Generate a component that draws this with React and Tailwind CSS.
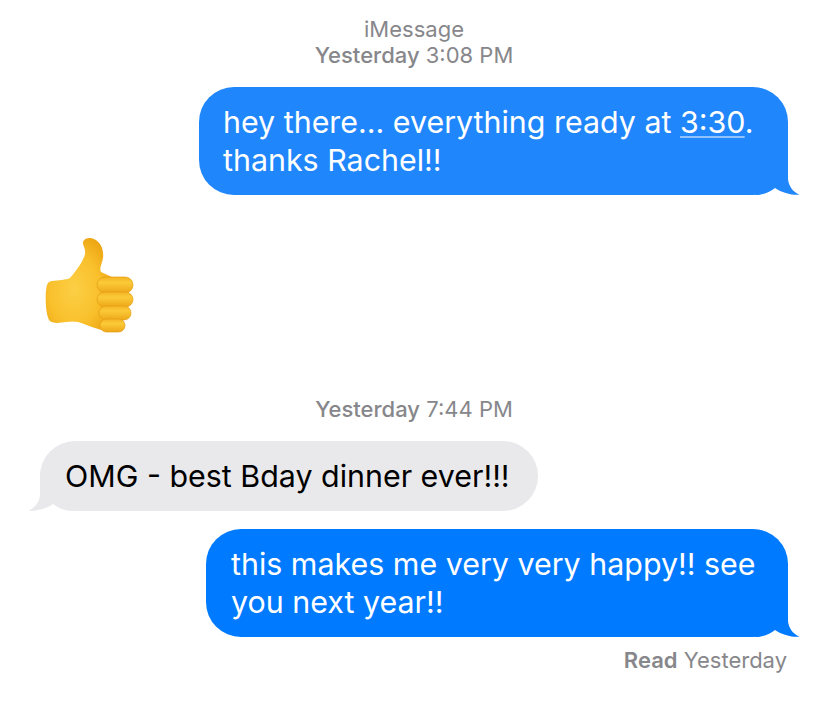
import React from 'react'

const Tail = ({ color, left }) => (
    <svg
        viewBox="0 0 45 40"
        className={`absolute bottom-0 w-[45px] h-[40px] ${left ? '-left-[12px] -scale-x-100' : '-right-[12px]'}`}
    >
        <path d="M33 0 V24 C33.500 31 38 37 44.500 39.700 C38 40.500 27 38 20 33 C15 37 8 40 0 40 Z" fill={color} />
    </svg>
)

const Bubble = ({ children, color, left, className }) => (
    <div className={`relative rounded-[35px] ${className}`} style={{ backgroundColor: color }}>
        <Tail color={color} left={left} />
        <div className="relative">{children}</div>
    </div>
)

const ThumbsUp = () => (
    <svg viewBox="0 0 92 98" className="w-[92px] h-[98px]">
        <defs>
            <radialGradient id="hand" cx="0.42" cy="0.55" r="0.62">
                <stop offset="0" stopColor="#fccf45" />
                <stop offset="0.6" stopColor="#f9c02c" />
                <stop offset="1" stopColor="#eca412" />
            </radialGradient>
            <linearGradient id="finger" x1="0" y1="0" x2="0" y2="1">
                <stop offset="0" stopColor="#f4b423" />
                <stop offset="0.35" stopColor="#fbca38" />
                <stop offset="1" stopColor="#eea718" />
            </linearGradient>
        </defs>
        <path
            d="M8 46 C14 45 22 45 26 43 C32 36 40 25 41 19 C42 13 38 10 39 7 C40 3 46 2 50 4 C57 7 60 15 59 23 C58 29 55 33 57 37 L70 43 V97 C62 97 50 93 40 89 C34 86 28 86 22 87 C16 88 8 89 5 85 C1 77 1 56 3 50 C4 47 6 46 8 46 Z"
            fill="url(#hand)"
        />
        <rect x="53" y="42" width="36" height="16" rx="8" fill="url(#finger)" stroke="#e49d14" strokeWidth="0.7" />
        <rect x="53" y="57" width="36" height="15" rx="7.500" fill="url(#finger)" stroke="#e49d14" strokeWidth="0.7" />
        <rect x="55" y="71" width="32" height="14" rx="7" fill="url(#finger)" stroke="#e49d14" strokeWidth="0.7" />
        <rect x="56" y="84" width="25" height="13" rx="6.500" fill="url(#finger)" stroke="#e49d14" strokeWidth="0.7" />
    </svg>
)

const App = () => {
    return (
        <div className="w-[828px] h-[701px] bg-white overflow-hidden flex flex-col font-['Inter','Liberation_Sans',sans-serif]">
            <div className="pt-[16px] text-center text-[22px] leading-[26px] text-[#87878b]">
                <p>iMessage</p>
                <p><span className="font-medium">Yesterday</span> 3:08 PM</p>
            </div>

            <div className="mt-[19px] pr-[40px] flex justify-end">
                <Bubble color="#1f86fb" className="w-[589px] h-[108px] pl-[24px] pt-[16px] text-white text-[30.400px] leading-[38px]">
                    <p>hey there... everything ready at <span className="underline decoration-[#8fc1fb] decoration-2 underline-offset-[3px]">3:30</span>.</p>
                    <p>thanks Rachel!!</p>
                </Bubble>
            </div>

            <div className="mt-[40px] pl-[44px]">
                <ThumbsUp />
            </div>

            <div className="mt-[63px] text-center text-[22px] leading-[26px] text-[#87878b]">
                <p><span className="font-medium">Yesterday</span> 7:44 PM</p>
            </div>

            <div className="mt-[19px] pl-[40px] flex justify-start">
                <Bubble color="#e9e9eb" left className="w-[498px] h-[70px] pl-[25px] pt-[16px] text-black text-[30.400px] leading-[38px]">
                    <p>OMG - best Bday dinner ever!!!</p>
                </Bubble>
            </div>

            <div className="mt-[18px] pr-[40px] flex justify-end">
                <Bubble color="#007aff" className="w-[582px] h-[108px] pl-[25px] pt-[16px] text-white text-[30.400px] leading-[38px]">
                    <p>this makes me very very happy!! see</p>
                    <p>you next year!!</p>
                </Bubble>
            </div>

            <div className="mt-[10px] pr-[41px] text-right text-[22px] leading-[26px] text-[#87878b]">
                <span className="font-semibold">Read</span> Yesterday
            </div>
        </div>
    )
}

export default App
